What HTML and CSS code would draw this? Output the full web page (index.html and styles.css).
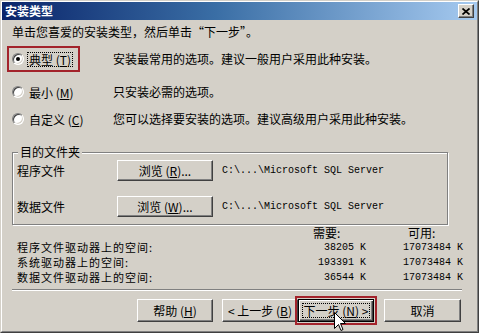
FILE: index.html
```html
<!DOCTYPE html>
<html lang="zh-CN">
<head>
<meta charset="utf-8">
<title>安装类型</title>
<link rel="stylesheet" href="styles.css">
</head>
<body>
<div class="window">
  <div class="frame">
    <div class="titlebar">
      <span class="title">安装类型</span>
      <span class="close"><svg width="8" height="7" viewBox="0 0 8 7"><path d="M0.5 0.5L7.5 6.5M7.5 0.5L0.5 6.5" stroke="#000" stroke-width="1.7" fill="none"/></svg></span>
    </div>
    <div class="body">
      <p class="intro">单击您喜爱的安装类型，然后单击“下一步”。</p>
      <div class="options">
        <div class="opt opt-typical">
          <span class="choice marked"><span class="radio checked"></span><span class="label focus">典型 (<u>T</u>)</span></span>
          <span class="desc">安装最常用的选项。建议一般用户采用此种安装。</span>
        </div>
        <div class="opt opt-min">
          <span class="choice"><span class="radio"></span><span class="label">最小 (<u>M</u>)</span></span>
          <span class="desc">只安装必需的选项。</span>
        </div>
        <div class="opt opt-custom">
          <span class="choice"><span class="radio"></span><span class="label">自定义 (<u>C</u>)</span></span>
          <span class="desc">您可以选择要安装的选项。建议高级用户采用此种安装。</span>
        </div>
      </div>
      <fieldset class="group">
        <legend>目的文件夹</legend>
        <div class="frow">
          <span class="flabel">程序文件</span>
          <button class="btn browse" type="button">浏览 (<u>R</u>)...</button>
          <span class="path">C:\...\Microsoft SQL Server</span>
        </div>
        <div class="frow frow-2">
          <span class="flabel">数据文件</span>
          <button class="btn browse" type="button">浏览 (<u>W</u>)...</button>
          <span class="path">C:\...\Microsoft SQL Server</span>
        </div>
      </fieldset>
      <div class="space">
        <span></span><span class="head head-need">需要:</span><span class="head head-avail">可用:</span>
        <span class="slabel">程序文件驱动器上的空间:</span><span class="num">38205 K</span><span class="num">17073484 K</span>
        <span class="slabel">系统驱动器上的空间:</span><span class="num">193391 K</span><span class="num">17073484 K</span>
        <span class="slabel">数据文件驱动器上的空间:</span><span class="num">36544 K</span><span class="num">17073484 K</span>
      </div>
      <div class="sep"></div>
      <div class="actions">
        <button class="btn act btn-help" type="button">帮助 (<u>H</u>)</button>
        <button class="btn act btn-back" type="button">&lt; 上一步 (<u>B</u>)</button>
        <button class="btn act btn-next" type="button"><span class="focusbox">下一步 (<u>N</u>) &gt;</span></button>
        <button class="btn act btn-cancel" type="button">取消</button>
      </div>
    </div>
  </div>
  <svg class="cursor" width="12" height="20" viewBox="0 0 12 20"><path d="M0.5 0.5V16.5L4.5 12.5L7 18.5L9 17.5L6.5 11.5H11.5Z" fill="#fff" stroke="#000" stroke-width="1" stroke-linejoin="miter"/></svg>
</div>
</body>
</html>
```

FILE: styles.css
```css
* { box-sizing: border-box; }
html, body { margin: 0; padding: 0; }
body {
  width: 479px;
  height: 333px;
  overflow: hidden;
  background: #d4d0c8;
  font-family: "Noto Sans CJK SC", "Liberation Sans", sans-serif;
  font-size: 12px;
  line-height: 14px;
  color: #000;
}
.window {
  position: relative;
  width: 479px;
  height: 333px;
  border: 1px solid;
  border-color: #d4d0c8 #404040 #404040 #d4d0c8;
  background: #d4d0c8;
}
.frame {
  height: 100%;
  border: 1px solid;
  border-color: #fff #808080 #808080 #fff;
}
.titlebar {
  height: 18px;
  display: flex;
  align-items: center;
  justify-content: space-between;
  padding: 0 3px 0 3px;
  background: linear-gradient(to right, #0a246a, #3a6ea5 45%, #a6caf0);
}
.title {
  color: #fff;
  font-weight: bold;
  font-size: 12px;
  line-height: 14px;
}
.close {
  width: 16px;
  height: 14px;
  display: flex;
  align-items: center;
  justify-content: center;
  background: #d4d0c8;
  border: 1px solid;
  border-color: #fff #404040 #404040 #fff;
  box-shadow: inset -1px -1px #808080;
}
.body {
  padding: 0 15px 0 10px;
}
.intro {
  margin: 5px 0 0;
}
.options {
  margin-top: 9px;
}
.opt {
  display: grid;
  grid-template-columns: 101px auto;
  align-items: center;
  height: 22px;
}
.opt-min { margin-top: 11px; }
.opt-custom { margin-top: 5px; }
.choice {
  display: inline-flex;
  align-items: center;
  height: 22px;
  width: 69px;
  margin-left: -3px;
  padding-left: 3px;
}
.choice.marked {
  outline: 2px solid #a3232b;
}
.radio {
  position: relative;
  flex: none;
  width: 12px;
  height: 12px;
  border-radius: 50%;
  background: #fff;
  border: 1px solid;
  border-color: #808080 #fff #fff #808080;
  box-shadow: inset 1px 1px #404040, inset -1px -1px #d4d0c8;
}
.radio.checked::after {
  content: "";
  position: absolute;
  left: 3px;
  top: 3px;
  width: 4px;
  height: 4px;
  border-radius: 50%;
  background: #000;
}
.label {
  margin-left: 3px;
  padding: 0 1px;
  line-height: 13px;
  border: 1px solid transparent;
  white-space: nowrap;
}
.label.focus {
  border: 1px dotted #000;
}
.desc {
  white-space: nowrap;
}
.group {
  margin: 15px 14px 0 0;
  padding: 1px 0 7px 4px;
  border: 1px solid #808080;
  box-shadow: inset 1px 1px #fff, 1px 1px #fff;
  min-width: 0;
}
.group legend {
  padding: 0 2px;
  margin-left: 1px;
  line-height: 14px;
  background: #d4d0c8;
}
.frow {
  display: flex;
  align-items: center;
  height: 21px;
}
.frow-2 { margin-top: 15px; }
.flabel {
  width: 100px;
  flex: none;
}
.btn {
  font-family: inherit;
  font-size: 12px;
  line-height: 14px;
  color: #000;
  background: #d4d0c8;
  border: 1px solid;
  border-color: #fff #404040 #404040 #fff;
  box-shadow: inset -1px -1px #808080;
  padding: 0;
  margin: 0;
  display: flex;
  align-items: center;
  justify-content: center;
  white-space: nowrap;
}
.browse {
  width: 96px;
  height: 21px;
  flex: none;
}
.path {
  margin-left: 9px;
  font-family: "Liberation Mono", "DejaVu Sans Mono", monospace;
  font-size: 10px;
  white-space: nowrap;
}
.space {
  display: grid;
  grid-template-columns: 1fr 80px 97px;
  grid-auto-rows: 15px;
  align-items: center;
  padding-left: 5px;
  margin-right: -1px;
  line-height: 15px;
}
.slabel {
  font-size: 11px;
  letter-spacing: 1px;
  white-space: nowrap;
}
.head-need { padding-left: 27px; }
.head-avail { padding-left: 42px; }
.num {
  text-align: right;
  font-family: "Liberation Mono", "DejaVu Sans Mono", monospace;
  font-size: 10px;
}
.sep {
  margin-top: 4px;
  height: 2px;
  border-top: 1px solid #808080;
  border-bottom: 1px solid #fff;
}
.actions {
  display: flex;
  justify-content: flex-end;
  margin-top: 8px;
  padding-right: 1px;
}
.act {
  width: 76px;
  height: 23px;
}
.btn-help { margin-right: 9px; }
.btn-next {
  margin-right: 10px;
  padding: 3px;
  border: 1px solid #000;
  box-shadow: inset 1px 1px #fff, inset -1px -1px #404040, inset -2px -2px #808080;
  outline: 2px solid #a3232b;
  outline-offset: 1px;
}
.focusbox {
  flex: 1;
  height: 100%;
  display: flex;
  align-items: center;
  justify-content: center;
  border: 1px dotted #000;
}
.btn-cancel { width: 77px; }
.cursor {
  position: absolute;
  left: 333px;
  top: 311px;
}
```
